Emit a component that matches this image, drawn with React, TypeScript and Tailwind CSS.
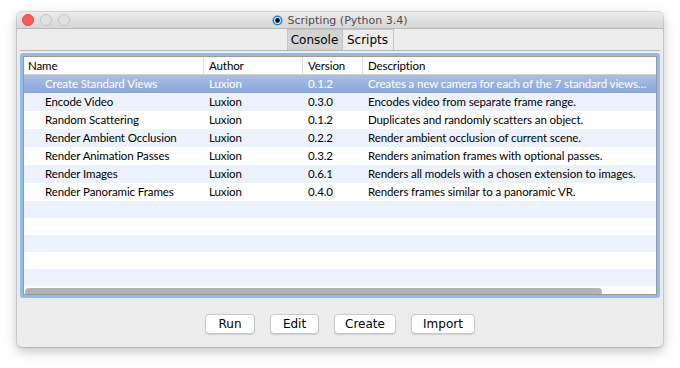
import React from "react";

const rows = [
  { name: "Create Standard Views", author: "Luxion", version: "0.1.2", desc: "Creates a new camera for each of the 7 standard views…" },
  { name: "Encode Video", author: "Luxion", version: "0.3.0", desc: "Encodes video from separate frame range." },
  { name: "Random Scattering", author: "Luxion", version: "0.1.2", desc: "Duplicates and randomly scatters an object." },
  { name: "Render Ambient Occlusion", author: "Luxion", version: "0.2.2", desc: "Render ambient occlusion of current scene." },
  { name: "Render Animation Passes", author: "Luxion", version: "0.3.2", desc: "Renders animation frames with optional passes." },
  { name: "Render Images", author: "Luxion", version: "0.6.1", desc: "Renders all models with a chosen extension to images." },
  { name: "Render Panoramic Frames", author: "Luxion", version: "0.4.0", desc: "Renders frames similar to a panoramic VR." },
];

const tableFont = { fontFamily: "Lato, 'Noto Sans', sans-serif" };
const uiFont = { fontFamily: "'DejaVu Sans', 'Liberation Sans', sans-serif" };

export default function App() {
  return (
    <div className="w-[680px] h-[368px] bg-white overflow-hidden pt-[12px] pl-[17px]">
      <div className="w-[646px] h-[335px] bg-[#ececec] rounded-[5px] shadow-[0_0_0_1px_rgba(0,0,0,0.12),0_4px_12px_rgba(0,0,0,0.25)] flex flex-col overflow-hidden">
        {/* Title bar */}
        <div className="relative h-[17px] shrink-0 bg-gradient-to-b from-[#ebebeb] to-[#d6d6d6] border-b border-[#b9b9b9] flex items-center justify-center">
          <div className="absolute left-[5px] top-[2px] flex gap-[6px]">
            <div className="w-[12px] h-[12px] rounded-full bg-[#fc5f57] border border-[#e0443e]" />
            <div className="w-[12px] h-[12px] rounded-full bg-[#e2e2e2] border border-[#c4c4c4]" />
            <div className="w-[12px] h-[12px] rounded-full bg-[#e2e2e2] border border-[#c4c4c4]" />
          </div>
          <div className="flex items-center gap-[4px] text-[11px] text-[#4d4d4d] leading-none" style={uiFont}>
            <svg width="11" height="11" viewBox="0 0 11 11">
              <circle cx="5.5" cy="5.5" r="5" fill="#1e88e5" />
              <circle cx="5.5" cy="5.5" r="3.4" fill="#e8f1fb" />
              <circle cx="5.5" cy="5.5" r="2.4" fill="#111" />
            </svg>
            <span>Scripting (Python 3.4)</span>
          </div>
        </div>

        {/* Tabs */}
        <div className="h-[21px] shrink-0 flex justify-center items-end">
          <div className="flex h-[21px] text-[12px] text-black" style={uiFont}>
            <div className="w-[56px] flex items-center justify-center bg-[#d3d3d3] border border-b-0 border-[#c4c4c4]">Console</div>
            <div className="w-[51px] flex items-center justify-center bg-[#ededed] border border-l-0 border-b-0 border-[#c4c4c4]">Scripts</div>
          </div>
        </div>
        <div className="mx-[3px] h-[1px] bg-[#b8b8b8] shrink-0" />

        {/* Table panel */}
        <div className="mt-[2px] mx-[3px] h-[245px] shrink-0 rounded-[3px] border-[3px] border-[#8fbcf0] bg-[#8fbcf0]">
          <div className="h-full border border-[#9a9a9a] bg-white flex flex-col overflow-hidden text-[11.5px] tracking-[-0.1px] text-black" style={tableFont}>
            {/* Header */}
            <div className="h-[18px] shrink-0 flex border-b border-[#d2d2d2] leading-[17px]">
              <div className="w-[180px] pl-[4px] border-r border-[#dcdcdc]">Name</div>
              <div className="w-[99px] pl-[5px] border-r border-[#dcdcdc]">Author</div>
              <div className="w-[60px] pl-[5px] border-r border-[#dcdcdc]">Version</div>
              <div className="flex-1 pl-[5px]">Description</div>
            </div>
            {rows.map((r, i) => (
              <div
                key={r.name}
                className={
                  "h-[18px] shrink-0 flex leading-[18px] " +
                  (i === 0
                    ? "bg-gradient-to-b from-[#a9c0e8] to-[#8aa6d8] text-white"
                    : i % 2 === 1
                    ? "bg-[#edf3fe]"
                    : "bg-white")
                }
              >
                <div className="w-[180px] pl-[21px] whitespace-nowrap">{r.name}</div>
                <div className="w-[99px] pl-[5px]">{r.author}</div>
                <div className="w-[60px] pl-[5px]">{r.version}</div>
                <div className="flex-1 min-w-0 pl-[5px] pr-[2px] whitespace-nowrap">{r.desc}</div>
              </div>
            ))}
            {[0, 1, 2, 3, 4].map((k) => (
              <div key={k} className={"h-[17px] shrink-0 " + (k % 2 === 0 ? "bg-[#edf3fe]" : "bg-white")} />
            ))}
            <div className="flex-1 bg-[#edf3fe]" />
            <div className="h-[11px] shrink-0 bg-white flex items-center px-[1px]">
              <div className="w-[577px] h-[8px] rounded-full bg-[#b3b3b3]" />
            </div>
          </div>
        </div>

        {/* Buttons */}
        <div className="flex justify-center gap-[15px] mt-[16px] text-[12px] text-black" style={uiFont}>
          {[
            ["Run", "w-[50px]"],
            ["Edit", "w-[49px]"],
            ["Create", "w-[62px]"],
            ["Import", "w-[64px]"],
          ].map(([t, w]) => (
            <div
              key={t}
              className={w + " h-[20px] flex items-center justify-center bg-white border border-[#c8c8c8] rounded-[4px] shadow-[0_1px_1px_rgba(0,0,0,0.12)]"}
            >
              {t}
            </div>
          ))}
        </div>
      </div>
    </div>
  );
}
